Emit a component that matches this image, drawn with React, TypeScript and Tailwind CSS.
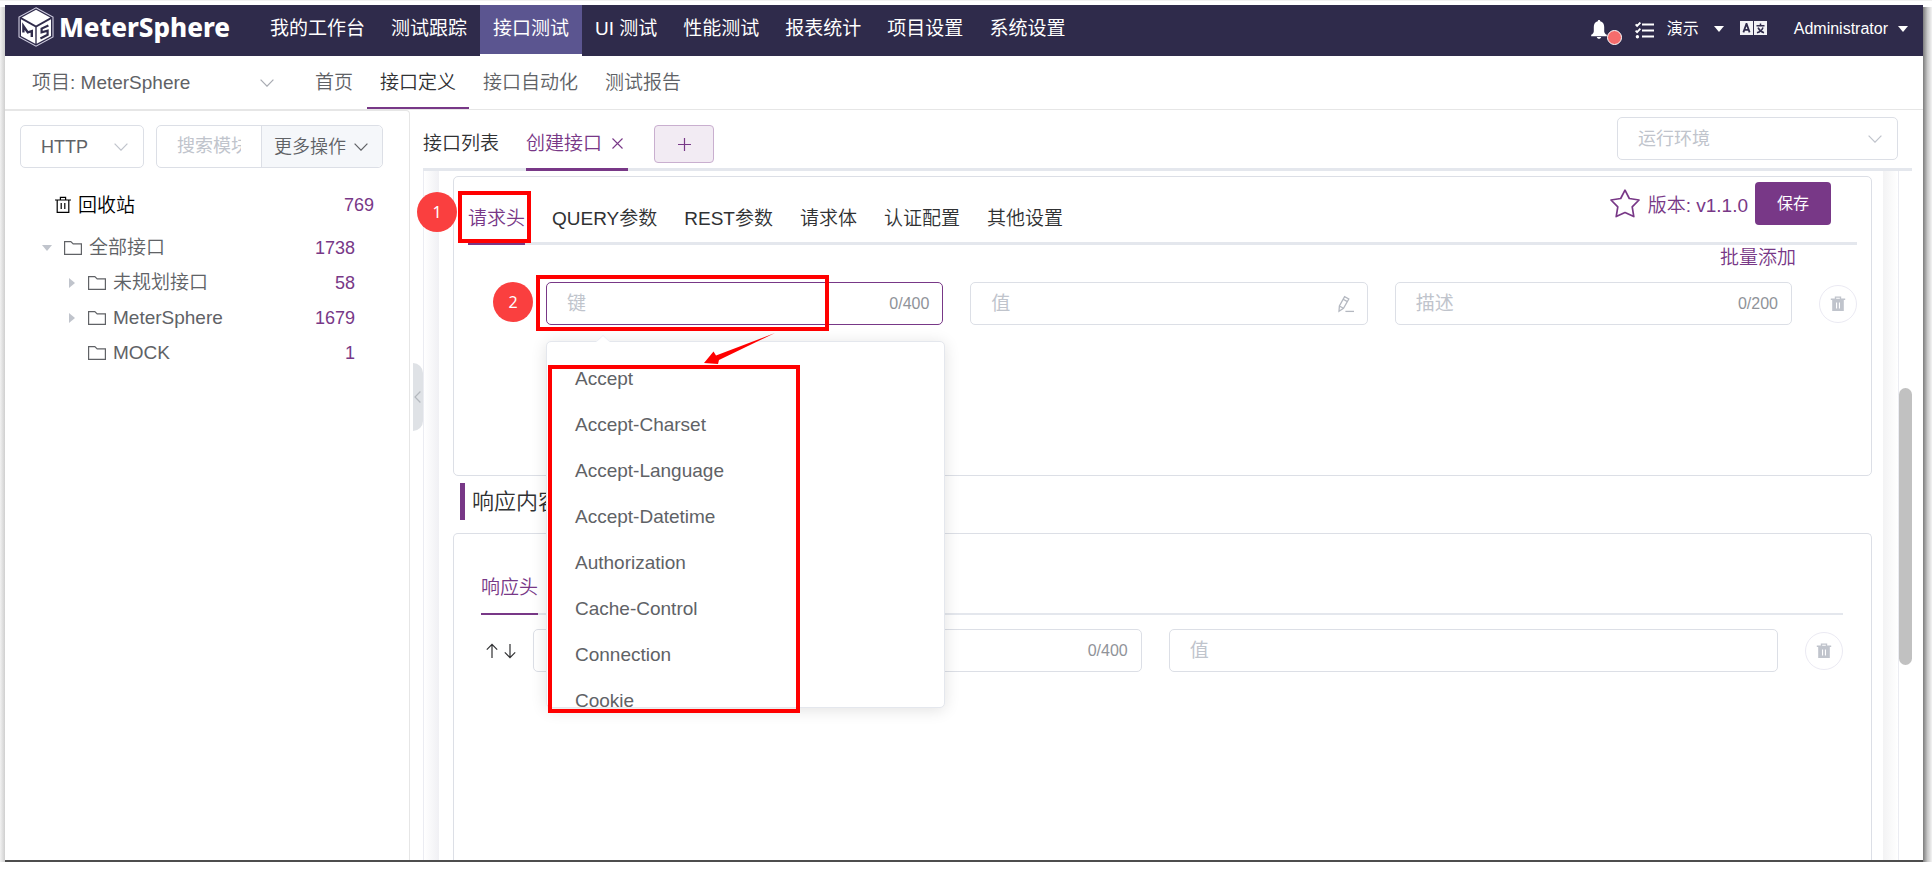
import React from "react";

type IconProps = { className?: string };

function Logo() {
  return (
    <svg viewBox="0 0 36 40" className="h-10 w-9" aria-hidden="true">
      <path d="M18 0.8 35 10v20L18 39.2 1 30V10Z" fill="none" stroke="#cfcde0" strokeWidth="1.1" />
      <path d="M18 2.8 32.2 10.6 18 18.6 3.8 10.6Z" fill="#fff" />
      <path d="M3 12.2 17.3 20.2v16.6L3 29Z" fill="#fff" />
      <path d="M33 12.2 18.7 20.2v16.6L33 29Z" fill="#fff" />
      <path d="M5.4 25.6V19l4.4 6.400 4-1.200V30" fill="none" stroke="#2f2b4b" strokeWidth="2.400" />
      <path d="M30.400 18.400 23.600 21.600v3.800l6-1.600v4L22.400 31.400" fill="none" stroke="#2f2b4b" strokeWidth="2.200" />
    </svg>
  );
}

function ChevronDown({ className = "" }: IconProps) {
  return (
    <svg viewBox="0 0 14 8" className={`h-2 w-3.5 ${className}`} fill="none" stroke="currentColor" strokeWidth="1.2" aria-hidden="true">
      <path d="M0.6 0.6 7 7.2 13.4 0.6" />
    </svg>
  );
}

function CaretDown({ className = "" }: IconProps) {
  return (
    <svg viewBox="0 0 10 6" className={`h-1.5 w-2.5 ${className}`} fill="currentColor" aria-hidden="true">
      <path d="M0 0h10L5 6Z" />
    </svg>
  );
}

function CaretRight({ className = "" }: IconProps) {
  return (
    <svg viewBox="0 0 6 10" className={`h-2.5 w-1.5 ${className}`} fill="currentColor" aria-hidden="true">
      <path d="M0 0v10l6-5Z" />
    </svg>
  );
}

function FolderIcon() {
  return (
    <svg viewBox="0 0 18 16" className="h-4 w-[18px] shrink-0" fill="none" stroke="currentColor" strokeWidth="1.2" aria-hidden="true">
      <path d="M0.6 1.6h6.2l2.4 2.3h8.2v10.5H0.6Z" />
    </svg>
  );
}

function TrashOutline() {
  return (
    <svg viewBox="0 0 16 18" className="h-[18px] w-4 shrink-0" fill="none" stroke="currentColor" strokeWidth="1.200" aria-hidden="true">
      <path d="M0 4h16M2.2 4v12.4h11.6V4M5.4 3.8V1.4h5.2v2.4M6.2 7v6M9.8 7v6" />
    </svg>
  );
}

function TrashSolid() {
  return (
    <svg viewBox="0 0 16 16" className="size-4" aria-hidden="true">
      <path d="M0.8 2.6h4V0.6h6.4v2h4v1.5H0.8ZM6.2 1.8v.9h3.6v-.9Z" fill="#c0c4cc" fillRule="evenodd" />
      <path d="M2.2 4h11.6v11H2.2ZM6 6.4v6h1.1v-6ZM8.9 6.4v6H10v-6Z" fill="#c0c4cc" fillRule="evenodd" />
    </svg>
  );
}

function PenIcon() {
  return (
    <svg viewBox="0 0 16 18" className="h-[18px] w-4" fill="none" stroke="#b4b8c0" strokeWidth="1.3" aria-hidden="true">
      <path d="M1 16.2 1.4 11 6.6 1.6l4.2 2.4-5.3 9.4ZM1.4 11l4 2.3M5.2 4.2l4.2 2.4" />
      <path d="M7.4 16.4H16" />
    </svg>
  );
}

function BellIcon() {
  return (
    <svg viewBox="0 0 16 19" className="h-[19px] w-4" fill="#fff" aria-hidden="true">
      <path d="M8 0c.8 0 1.2.5 1.2 1.2C12 1.9 13.2 4 13.2 7v4.2c0 1.6 1 2.7 2.6 3.6v1.4H.2v-1.4c1.600-.9 2.600-2 2.600-3.600V7c0-3 1.200-5.100 4-5.800C6.800.5 7.200 0 8 0Z" />
      <path d="M5.800 17h4.400c-.2 1.100-1.100 1.800-2.200 1.800S6 18.100 5.800 17Z" />
    </svg>
  );
}

function TaskListIcon() {
  return (
    <svg viewBox="0 0 19 17" className="h-[17px] w-[19px]" fill="none" stroke="#fff" strokeWidth="1.800" aria-hidden="true">
      <path d="M7 2.500h12M7 8.500h12M7 14.500h12M0.600 2.400l1.500 1.500L5.400.5M0.600 8.600l1.500 1.500 3.300-3.400" />
      <circle cx="2.400" cy="14.800" r="1.700" fill="#fff" stroke="none" />
    </svg>
  );
}

function LanguageIcon() {
  return (
    <svg viewBox="0 0 27 15" className="h-[15px] w-[27px]" aria-hidden="true">
      <path d="M0 0h13v14H0ZM14 0h13v14H14Z" fill="#f2f2f5" />
      <path d="M3.400 11.400 6.400 3h.2l3 8.400M4.300 8.800h4.300" fill="none" stroke="#2f2b4b" strokeWidth="1.800" />
      <path d="M16.500 4.800h8M20.500 2.600v2.200M18 6.600c1.200 2.400 3 4.200 6 5.200M23 6.400c-.9 2.600-2.900 4.400-6 5.400" fill="none" stroke="#2f2b4b" strokeWidth="1.500" />
    </svg>
  );
}

function StarIcon() {
  return (
    <svg viewBox="0 0 30 29" className="h-[29px] w-[30px]" fill="none" stroke="#783887" strokeWidth="1.700" strokeLinejoin="round" aria-hidden="true">
      <path d="M15 1.200 19.300 9.500 29 11 22.200 17.900 23.800 27.600 15 23.500 6.200 27.600 7.800 17.900 1 11 10.700 9.500Z" />
    </svg>
  );
}

function ArrowIcon({ up = false }: { up?: boolean }) {
  return (
    <svg viewBox="0 0 12 16" className="h-4 w-3" fill="none" stroke="#303133" strokeWidth="1.200" aria-hidden="true">
      <path d={up ? "M6 15V1.400M0.800 6.600 6 1.400l5.200 5.200" : "M6 1v13.600M0.800 9.400 6 14.600l5.200-5.200"} />
    </svg>
  );
}

function StepBadge({ n, className }: { n: number; className: string }) {
  return (
    <span className={`absolute z-30 flex size-10 items-center justify-center rounded-full bg-[#fa3f3f] font-['Noto_Sans',sans-serif] text-base font-normal text-white ${className}`}>
      {n}
    </span>
  );
}

function DeleteButton({ label }: { label: string }) {
  return (
    <button aria-label={label} className="flex size-[38px] shrink-0 items-center justify-center rounded-full border border-[#ebeaf3]">
      <TrashSolid />
    </button>
  );
}

type FieldProps = { label: string; placeholder?: string; suffix?: React.ReactNode; active?: boolean; children?: React.ReactNode };

function Field({ label, placeholder, suffix, active, children }: FieldProps) {
  return (
    <div className="relative min-w-0 flex-1">
      <div className={`flex h-[43px] items-center rounded-[5px] border bg-white pr-[13px] pl-5 ${active ? "border-[#783887]" : "border-[#dcdfe6]"}`}>
        <input
          aria-label={label}
          placeholder={placeholder}
          className="h-full min-w-0 flex-1 bg-transparent font-normal outline-none placeholder:text-[#c0c4cc]"
        />
        <span className="text-base text-[#909399]">{suffix}</span>
      </div>
      {children}
    </div>
  );
}

const mainNav = ["我的工作台", "测试跟踪", "接口测试", "UI 测试", "性能测试", "报表统计", "项目设置", "系统设置"];
const subNav = ["首页", "接口定义", "接口自动化", "测试报告"];
const requestTabs = ["请求头", "QUERY参数", "REST参数", "请求体", "认证配置", "其他设置"];
const headerNames = ["Accept", "Accept-Charset", "Accept-Language", "Accept-Datetime", "Authorization", "Cache-Control", "Connection", "Cookie"];
const modules = [
  { name: "未规划接口", count: 58, branch: true },
  { name: "MeterSphere", count: 1679, branch: true },
  { name: "MOCK", count: 1, branch: false },
];

function TopBar() {
  return (
    <header className="flex h-[51px] shrink-0 bg-[#2f2b4b] font-normal text-white">
      <a href="#" className="flex w-[252px] shrink-0 items-start gap-[5px] pt-0.5 pl-[13px]">
        <Logo />
        <span className="font-['Noto_Sans',sans-serif] text-[26px] leading-[40px] font-extrabold">MeterSphere</span>
      </a>
      <nav className="flex whitespace-nowrap">
        {mainNav.map((item) => (
          <a
            key={item}
            href="#"
            className={`flex h-full items-center px-[13px] ${item === "接口测试" ? "border-b-2 border-white bg-[#5b5590] pb-0.5" : "pb-1"}`}
          >
            {item}
          </a>
        ))}
      </nav>
      <div className="ml-auto flex items-center pr-[15px] pb-3 text-base">
        <button aria-label="通知" className="mt-2.5 flex items-end">
          <BellIcon />
          <span className="-mb-1.5 size-[15px] rounded-full border border-white bg-[#f56c6c]" />
        </button>
        <button aria-label="任务" className="mt-3 ml-[13px]">
          <TaskListIcon />
        </button>
        <button className="mt-2 ml-[13px] flex items-center gap-[15px]">
          演示
          <CaretDown />
        </button>
        <button aria-label="语言" className="mt-2 ml-4">
          <LanguageIcon />
        </button>
        <button className="mt-2 ml-[27px] flex items-center gap-2.5">
          Administrator
          <CaretDown />
        </button>
      </div>
    </header>
  );
}

function SubBar() {
  return (
    <div className="flex h-[54px] shrink-0 border-b border-[#e6e6e6] text-[#606266]">
      <label className="relative ml-[27px] flex w-[270px] items-center">
        <select aria-label="项目" className="w-[242px] appearance-none bg-transparent outline-none">
          <option>项目: MeterSphere</option>
        </select>
        <ChevronDown className="pointer-events-none absolute right-7 text-[#a8abb2]" />
      </label>
      <nav className="flex gap-px whitespace-nowrap">
        {subNav.map((item) => (
          <a
            key={item}
            href="#"
            className={`flex items-center border-b-2 px-[13px] pt-0.5 ${item === "接口定义" ? "border-[#783887] text-[#303133]" : "border-transparent"}`}
          >
            {item}
          </a>
        ))}
      </nav>
    </div>
  );
}

function Sidebar() {
  return (
    <aside className="flex w-[405px] shrink-0 flex-col rounded-tr border-t border-r border-[#e6e6e6] pt-3.5 pl-[15px] text-[#606266]">
      <div className="flex gap-3 text-lg">
        <label className="relative flex h-[43px] w-[124px] items-center rounded-[5px] border border-[#dcdfe6]">
          <select aria-label="协议" className="w-full appearance-none bg-transparent pl-5 text-lg outline-none">
            <option>HTTP</option>
          </select>
          <ChevronDown className="pointer-events-none absolute right-[15px] text-[#c0c4cc]" />
        </label>
        <div className="flex h-[43px] rounded-[5px] border border-[#dcdfe6]">
          <div className="w-[104px] px-5">
            <input aria-label="搜索模块" placeholder="搜索模块" className="h-full w-full bg-transparent font-normal outline-none placeholder:text-[#c0c4cc]" />
          </div>
          <button className="flex items-center gap-2 rounded-r-[5px] border-l border-[#dcdfe6] bg-[#f5f7fa] pr-3.5 pl-3 text-[#606266]">
            更多操作
            <ChevronDown />
          </button>
        </div>
      </div>
      <a href="#" className="mt-5 flex h-[34px] items-center gap-[7px] pr-[35px] pl-[35px] text-black">
        <TrashOutline />
        回收站
        <span className="ml-auto text-lg text-[#783887]">769</span>
      </a>
      <ul className="mt-2 pr-[54px]">
        <li className="flex h-[35px] items-center pl-[22px]">
          <CaretDown className="text-[#c0c4cc]" />
          <span className="ml-3 flex items-center gap-[7px]">
            <FolderIcon />
            全部接口
          </span>
          <span className="ml-auto text-lg text-[#783887]">1738</span>
        </li>
        {modules.map((m) => (
          <li key={m.name} className="flex h-[35px] items-center pl-[49px]">
            <span className="w-[19px]">{m.branch && <CaretRight className="text-[#c0c4cc]" />}</span>
            <span className="flex items-center gap-[7px]">
              <FolderIcon />
              {m.name}
            </span>
            <span className="ml-auto text-lg text-[#783887]">{m.count}</span>
          </li>
        ))}
      </ul>
    </aside>
  );
}

function HeaderSuggestions() {
  return (
    <div className="absolute top-[59px] -right-0.5 left-0 z-10">
      <ul className="h-[367px] overflow-hidden rounded-[5px] border border-[#e4e7ed] bg-white pt-[13px] text-[#606266] shadow-[0_2px_16px_rgba(0,0,0,0.12)]">
        {headerNames.map((name) => (
          <li key={name} className="flex h-[46px] items-center px-7">
            {name}
          </li>
        ))}
      </ul>
      <svg viewBox="0 0 14 8" className="absolute -top-[6px] left-[50px] h-2 w-3.5" aria-hidden="true">
        <path d="M0 7 7 0.500 14 7v1H0Z" fill="#fff" />
        <path d="M0.500 6.600 7 0.500 13.500 6.600" fill="none" stroke="#ebeef5" strokeWidth="1" />
      </svg>
      <span className="absolute top-6 left-0.5 z-20 h-[348px] w-[252px] border-4 border-[#f00]" />
    </div>
  );
}

function RequestCard() {
  return (
    <section className="min-h-[300px] rounded-[5px] border border-[#dcdfe6] pr-3.5 pl-3.5">
      <div className="flex h-[68px] items-start border-b-[3px] border-[#e4e7ed] whitespace-nowrap">
        <div className="flex h-[68px] gap-[27px] text-[#303133]" role="tablist">
          {requestTabs.map((tab, i) => (
            <button key={tab} role="tab" className={`relative border-b-[3px] pt-[18px] ${i === 0 ? "border-[#783887] text-[#783887]" : "border-transparent"}`}>
              {tab}
              {i === 0 && (
                <>
                  <StepBadge n={1} className="top-[15px] -left-[51px]" />
                  <span className="absolute top-3.5 -left-2.5 z-20 h-[52px] w-[73px] border-4 border-[#f00]" />
                </>
              )}
            </button>
          ))}
        </div>
        <div className="mt-[5px] mr-[26px] ml-auto flex items-center text-[#783887]">
          <button aria-label="收藏">
            <StarIcon />
          </button>
          <span className="mt-1 mr-[7px] ml-2">版本: v1.1.0</span>
          <button className="h-[43px] w-[76px] rounded bg-[#783887] text-base font-normal text-white">保存</button>
        </div>
      </div>
      <div className="flex h-6 items-center justify-end pr-[61px]">
        <a href="#" className="text-[#783887]">批量添加</a>
      </div>
      <div className="mt-[13px] flex items-center gap-[27px] pl-[78px]">
        <Field label="键" placeholder="键" suffix="0/400" active>
          <StepBadge n={2} className="top-0 -left-[53px]" />
          <span className="pointer-events-none absolute -top-[7px] -left-2.5 z-20 h-14 w-[293px] border-4 border-[#f00]" />
          <HeaderSuggestions />
          <svg viewBox="0 0 72 32" className="absolute top-[51px] left-[158px] z-20 h-8 w-[72px]" aria-hidden="true">
            <path d="M0 30 9.500 18.500 12 22.500 71 0 15 27 14 31Z" fill="#f00" />
          </svg>
        </Field>
        <Field label="值" placeholder="值" suffix={<PenIcon />} />
        <Field label="描述" placeholder="描述" suffix="0/200" />
        <DeleteButton label="删除请求头" />
      </div>
    </section>
  );
}

function ResponseCard() {
  return (
    <section className="mt-[13px] flex-1 rounded-t-[5px] border border-b-0 border-[#dcdfe6] pr-7 pl-[27px]">
      <div className="flex h-[81px] border-b-2 border-[#e4e7ed]" role="tablist">
        <button role="tab" className="-mb-0.5 border-b-2 border-[#783887] pt-[27px] text-[#783887]">响应头</button>
      </div>
      <div className="mt-3.5 flex items-center gap-[27px]">
        <div className="flex min-w-0 flex-1 items-center">
          <span className="flex w-[52px] shrink-0 gap-1.5 pl-[5px]">
            <ArrowIcon up />
            <ArrowIcon />
          </span>
          <Field label="响应头键" suffix="0/400" />
        </div>
        <div className="flex min-w-0 flex-[0.922]">
          <Field label="响应头值" placeholder="值" />
        </div>
        <DeleteButton label="删除响应头" />
      </div>
    </section>
  );
}

function Workspace() {
  return (
    <main className="flex min-w-0 flex-1 flex-col pr-[11px]">
      <div className="ml-[13px] flex h-[61px] items-start border-b-[3px] border-[#e4e7ed] whitespace-nowrap">
        <div className="flex h-[61px] gap-[27px] text-[#303133]" role="tablist">
          <button role="tab" className="pt-1.5">接口列表</button>
          <button role="tab" className="flex w-[102px] items-center gap-2.5 border-b-[3px] border-[#783887] pt-2 text-[#783887]">
            创建接口
            <svg viewBox="0 0 11 11" className="size-[11px]" fill="none" stroke="currentColor" strokeWidth="1.100" aria-label="关闭">
              <path d="M0.500 0.500 10.500 10.500M10.500 0.500 0.500 10.500" />
            </svg>
          </button>
        </div>
        <button aria-label="新建标签" className="mt-[15px] ml-[26px] flex h-[38px] w-[60px] items-center justify-center rounded border border-[#c9afcf] bg-[#f2ebf3] text-[#783887]">
          <svg viewBox="0 0 13 13" className="size-[13px]" stroke="currentColor" strokeWidth="1.200" aria-hidden="true">
            <path d="M6.500 0v13M0 6.500h13" />
          </svg>
        </button>
        <label className="relative mt-[7px] mr-3.5 ml-auto flex h-[43px] w-[281px] items-center rounded-[5px] border border-[#dcdfe6] text-lg">
          <select aria-label="运行环境" className="w-full appearance-none bg-transparent pl-5 font-normal text-[#c0c4cc] outline-none">
            <option>运行环境</option>
          </select>
          <ChevronDown className="pointer-events-none absolute right-[15px] text-[#c0c4cc]" />
        </label>
      </div>
      <div className="flex flex-1">
        <div className="flex w-[13px] shrink-0 items-start pt-48 pl-[3px]">
          <button aria-label="收起" className="flex h-[68px] w-2.5 items-center rounded-r-[10px] bg-[#dfe2e6] pl-px">
            <svg viewBox="0 0 7 12" className="h-3 w-[7px]" fill="none" stroke="#b4b8be" strokeWidth="1.200" aria-hidden="true">
              <path d="M6.400 0.500 1 6l5.400 5.500" />
            </svg>
          </button>
        </div>
        <div className="flex min-w-0 flex-1 border-x border-[#ebecf2]">
          <div className="w-[15px] shrink-0 bg-linear-to-r from-white to-[#f0f0f4]" />
          <div className="flex min-w-0 flex-1 flex-col pt-[5px] pr-[11px] pl-3.5">
            <RequestCard />
            <h2 className="mt-[7px] ml-[7px] flex h-[37px] items-center border-l-[5px] border-[#783887] pl-[7px] text-[22px] text-[#303133]">
              响应内容
            </h2>
            <ResponseCard />
          </div>
          <div className="w-[15px] shrink-0 bg-linear-to-r from-[#f3f3f4] to-white" />
        </div>
        <div className="w-[13px] shrink-0 pt-[217px]">
          <div className="h-[277px] rounded-full bg-[#c1c1c1]" />
        </div>
      </div>
    </main>
  );
}

export default function App() {
  return (
    <div className="flex min-h-screen flex-col bg-white pb-[7px] font-['Liberation_Sans','Noto_Sans_CJK_SC',sans-serif] text-[19px] leading-[27px] font-[350]">
      <div className="h-px bg-[#f0f0f0]" />
      <div className="flex flex-1 pt-1">
        <div className="mt-0.5 w-[5px] shrink-0 bg-linear-to-r from-[#f2f2f2] to-[#cfcfcf]" />
        <div className="flex min-w-0 flex-1 flex-col border-b-2 border-[#4d4d4d]">
          <TopBar />
          <SubBar />
          <div className="flex flex-1">
            <Sidebar />
            <Workspace />
          </div>
        </div>
        <div className="mt-0.5 w-[9px] shrink-0 bg-linear-to-r from-[#7d7d7d] via-[#c8c8c8] to-[#f4f4f4]" />
      </div>
    </div>
  );
}
